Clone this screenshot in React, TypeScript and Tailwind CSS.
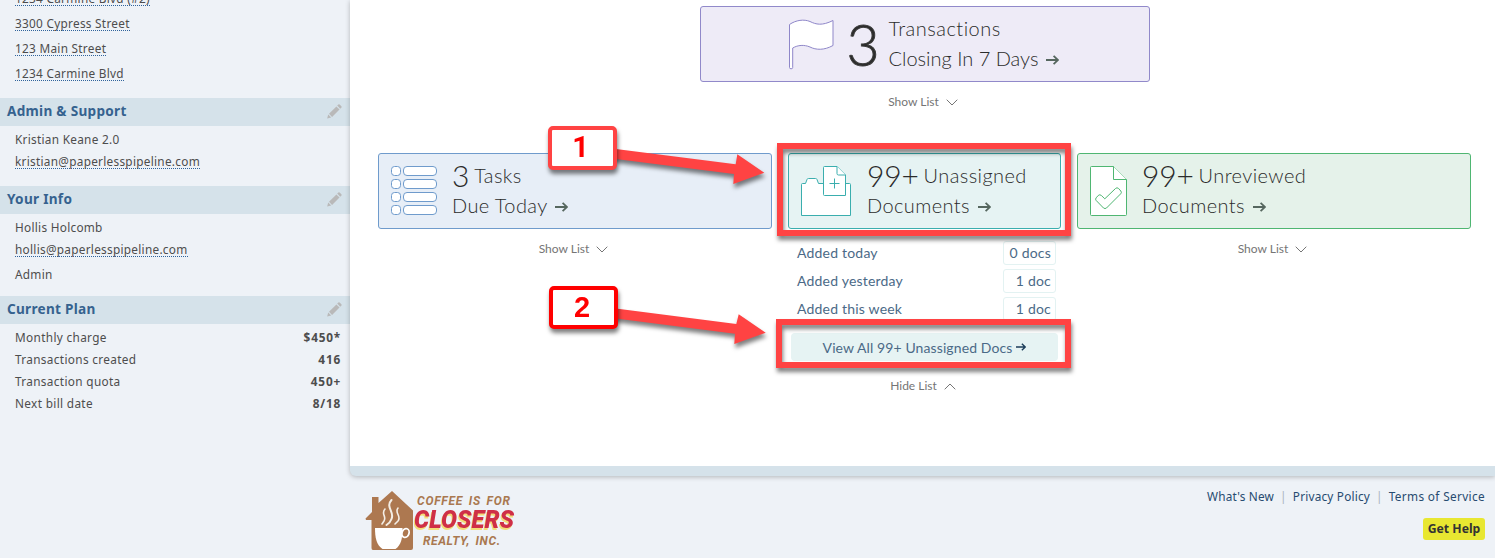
import React from "react";

const ArrowRight: React.FC<{ className?: string }> = ({
  className = "mb-[2px] ml-[2px] h-[10px] w-[13px] text-[#56675f]",
}) => (
  <svg viewBox="0 0 13 10" className={`inline-block ${className}`} fill="none" stroke="currentColor">
    <path d="M0 5h12M7.6 0.8L12 5L7.6 9.2" strokeWidth="1.8" />
  </svg>
);

const PencilIcon = () => (
  <svg viewBox="0 0 15 15" className="-mt-[2px] h-[15px] w-[15px] text-[#b9b9b9]" fill="currentColor">
    <path d="M0.2 14.6L1.2 10.6L4.2 13.6Z" />
    <path d="M2 9.8L9.4 2.4L12.5 5.5L5.1 12.9Z" />
    <path d="M10.2 1.6L11.4 0.4Q12 0 12.6 0.5L14.4 2.3Q14.9 2.9 14.4 3.5L13.2 4.7Z" />
  </svg>
);

const FlagIcon = () => (
  <svg viewBox="0 0 45 51" className="h-[51px] w-[45px]" fill="white" stroke="#8f87c9">
    <path d="M0.5 5.5C7 1 15 0 21 2.5C27 5.5 33 7 44 1.5V26.5C35 31.5 27 31 21 28C15 25.5 9 26 3.7 29V48.5Q3.7 49.8 2.1 49.8Q0.5 49.8 0.5 48.5Z" />
  </svg>
);

const TasksIcon = () => (
  <svg viewBox="0 0 46 50" className="h-[50px] w-[46px]" fill="white" stroke="#6f9bcc">
    {[0.5, 13.5, 26.5, 39.5].map((y) => (
      <g key={y}>
        <rect x="0.5" y={y} width="9" height="9" rx="3" />
        <rect x="12.5" y={y} width="33" height="9" rx="3.5" />
      </g>
    ))}
  </svg>
);

const FolderIcon = () => (
  <svg viewBox="0 0 50 50" className="h-[50px] w-[50px]" fill="white" stroke="#3aaeae">
    <path d="M0.5 49.5V18.5Q0.5 17.5 1.5 17.5H4.5L6 13.5Q6.3 12.5 7.5 12.5H14.5Q15.7 12.5 16 13.5L17.5 17.5H48.5Q49.5 17.5 49.5 18.5V49.5Z" />
    <path d="M23.5 0.5H36L44.5 9V29.5H23.5Q22.5 29.5 22.5 28.5V1.5Q22.5 0.5 23.5 0.5Z" />
    <path d="M36 0.5V7.5Q36 9 37.5 9H44.5" />
    <path d="M33.5 12.5V22.5M28.5 17.5H38.5" />
  </svg>
);

const ReviewedIcon = () => (
  <svg viewBox="0 0 37 50" className="h-[50px] w-[37px]" fill="white" stroke="#4fb672">
    <path d="M1.5 0.5H23.5L36.5 13.5V48.5Q36.5 49.5 35.5 49.5H1.5Q0.5 49.5 0.5 48.5V1.5Q0.5 0.5 1.5 0.5Z" />
    <path d="M23.5 0.5V13.5H36.5" />
    <path d="M6.2 31.8L8.2 29.5Q9.8 28 11.4 29.5L14.8 32.8L25.5 22.5Q27 21 28.6 22.5L30.8 25Q32 26.4 30.7 27.8L16.5 42Q15 43.2 13.5 42L6.2 34.5Q4.9 33.2 6.2 31.8Z" />
  </svg>
);

const ToggleList: React.FC<{ open?: boolean }> = ({ open }) => (
  <button className="flex h-[18px] items-center justify-center gap-[7px] pr-[3px] text-[12px] leading-[18px] text-[#757575]">
    {open ? "Hide List" : "Show List"}
    <svg viewBox="0 0 12 7" className="h-[7px] w-[12px]" fill="none" stroke="currentColor">
      <path d={open ? "M0.7 6.3L6 1L11.3 6.3" : "M0.7 0.7L6 6L11.3 0.7"} />
    </svg>
  </button>
);

interface StatCardProps {
  icon: React.ReactNode;
  count: string;
  label: string;
  secondLine: string;
  className: string;
}

const StatCard: React.FC<StatCardProps> = ({ icon, count, label, secondLine, className }) => (
  <div className={`flex h-[76px] items-center rounded-[3px] border pl-3 text-[#2b2b2b] ${className}`}>
    {icon}
    <div className="-mt-[2px] text-[20px] leading-[30px] font-light tracking-[0.4px] whitespace-nowrap">
      <div className="flex h-[30px] items-start gap-[5px]">
        <span className="text-[30px] tracking-[-0.2px]">{count}</span>
        <span>{label}</span>
      </div>
      <div className="h-[30px]">
        {secondLine} <ArrowRight />
      </div>
    </div>
  </div>
);

const SectionHeading: React.FC<{ title: string }> = ({ title }) => (
  <h2 className="flex h-7 items-center justify-between bg-[#d5e2ea] pr-2 pl-[7px] text-[13.6px] font-bold text-[#36628f]">
    <span className="-mt-[2px]">{title}</span>
    <PencilIcon />
  </h2>
);

const SidebarLink: React.FC<{ children: React.ReactNode }> = ({ children }) => (
  <a className="block w-fit border-b border-dotted border-[#2f639b] leading-[14px]">{children}</a>
);

const addresses = ["1234 Carmine Blvd (#2)", "3300 Cypress Street", "123 Main Street", "1234 Carmine Blvd"];

const plan = [
  ["Monthly charge", "$450*"],
  ["Transactions created", "416"],
  ["Transaction quota", "450+"],
  ["Next bill date", "8/18"],
];

const docCounts = [
  ["Added today", "0 docs"],
  ["Added yesterday", "1 doc"],
  ["Added this week", "1 doc"],
];

const Sidebar = () => (
  <aside className="h-[558px] w-[350px] shrink-0 overflow-hidden text-[11.8px] tracking-[0.28px] text-[#4d4d4d]">
    <div className="-mt-[9px] flex h-[107px] flex-col gap-[10px] pl-[15px]">
      {addresses.map((address) => (
        <SidebarLink key={address}>{address}</SidebarLink>
      ))}
    </div>
    <SectionHeading title="Admin & Support" />
    <div className="h-[60px] pt-[5px] pl-[15px]">
      <p className="mb-[7px] leading-4">Kristian Keane 2.0</p>
      <SidebarLink>kristian@paperlesspipeline.com</SidebarLink>
    </div>
    <SectionHeading title="Your Info" />
    <div className="h-[82px] pt-[5px] pl-[15px]">
      <p className="mb-[7px] leading-4">Hollis Holcomb</p>
      <SidebarLink>hollis@paperlesspipeline.com</SidebarLink>
      <p className="mt-[9px] leading-4">Admin</p>
    </div>
    <SectionHeading title="Current Plan" />
    <dl className="pt-[2px] pr-[9px] pl-[15px] leading-[22px] tracking-[0.34px]">
      {plan.map(([name, value]) => (
        <div key={name} className="flex justify-between">
          <dt>{name}</dt>
          <dd className="font-bold tracking-[0.8px]">{value}</dd>
        </div>
      ))}
    </dl>
  </aside>
);

const Dashboard = () => (
  <main className="h-[476px] rounded-bl-[6px] border-b-[10px] border-[#d5e2ea] bg-white pt-[6px] pl-7 font-['Lato',sans-serif] shadow-[0_1px_5px_rgba(0,0,0,0.25)]">
    <div className="flex h-[147px] w-[1093px] flex-col items-center">
      <div className="flex h-[76px] w-[450px] items-center rounded-[3px] border border-[#9189ca] bg-[#eeebf7] pl-[88px] text-[#2b2b2b]">
        <FlagIcon />
        <span className="ml-[13px] w-[42px] text-[57px] leading-[60px] font-light [-webkit-text-stroke:1px_#3c3c3c]">
          3
        </span>
        <div className="-mt-[2px] text-[20px] leading-[30px] font-light whitespace-nowrap">
          <p className="tracking-[0.5px]">Transactions</p>
          <p>
            Closing In 7 Days <ArrowRight />
          </p>
        </div>
      </div>
      <div className="mt-[11px]">
        <ToggleList />
      </div>
    </div>
    <div className="flex gap-4">
      <section className="flex w-[394px] flex-col gap-[11px]">
        <StatCard
          icon={<div className="w-[61px]"><TasksIcon /></div>}
          count="3"
          label="Tasks"
          secondLine="Due Today"
          className="border-[#6f9bcc] bg-[#e7eef7]"
        />
        <ToggleList />
      </section>
      <section className="flex w-[273px] flex-col">
        <StatCard
          icon={<div className="w-[66px]"><FolderIcon /></div>}
          count="99+"
          label="Unassigned"
          secondLine="Documents"
          className="border-[#3aaeae] bg-[#e6f3f3]"
        />
        <ul className="mt-3 flex flex-col gap-1 pr-[5px] pl-[9px] text-[14px] leading-[24px] tracking-[0.2px] text-[#4b6a87]">
          {docCounts.map(([label, docs]) => (
            <li key={label} className="flex h-6 justify-between">
              {label}
              <span className="h-6 w-[53px] rounded-[3px] border border-[#e3f2f2] pr-1 text-right leading-[22px]">
                {docs}
              </span>
            </li>
          ))}
        </ul>
        <a className="mt-[12px] mb-4 ml-[3px] flex h-7 w-[267px] items-center justify-center gap-1 rounded-[4px] bg-[#e6f3f3] text-[14px] tracking-[0.1px] text-[#4b6a87]">
          <span>View All 99+ Unassigned Docs</span>
          <ArrowRight className="h-[8px] w-[10px] text-[#1c3d5a]" />
        </a>
        <ToggleList open />
      </section>
      <section className="flex w-[394px] flex-col gap-[11px]">
        <StatCard
          icon={<div className="w-[52px]"><ReviewedIcon /></div>}
          count="99+"
          label="Unreviewed"
          secondLine="Documents"
          className="border-[#4fb672] bg-[#e5f2ea]"
        />
        <ToggleList />
      </section>
    </div>
  </main>
);

const CompanyLogo = () => (
  <svg viewBox="0 0 152 64" className="h-16 w-[152px] overflow-visible">
    <path fill="#ad7850" d="M0.5 28.5L7 22V7H13.5V13L27 1L48 20.5V58Q48 60 46 60H8Q6.5 60 6.5 58V30H1Z" />
    <g fill="none" stroke="#f4eee6" strokeLinecap="round">
      <path strokeWidth="2" d="M26.5 10C20 17 30 22 26.5 29C25.5 32 23 34 21.5 35" />
      <path strokeWidth="1.6" d="M20 19C15.5 24 22 26 19 31L17 34M33 18C29 23 37 26 33 31L30 34" />
    </g>
    <path fill="white" d="M10 38H37.5C37.5 49 36 55 30.5 59H17.5C11.5 55 10 48 10 38Z" />
    <ellipse cx="40.5" cy="43" rx="3.5" ry="4.5" fill="none" stroke="white" strokeWidth="1.8" transform="rotate(20 40.5 43)" />
    <g fontFamily="Roboto, sans-serif" fontStyle="italic" fontWeight="bold" fill="#a97850" fontSize="12">
      <text x="52" y="15" textLength="94" wordSpacing="2" letterSpacing="1">
        COFFEE IS FOR
      </text>
      <text x="58" y="55" textLength="78" wordSpacing="2" letterSpacing="1">
        REALTY, INC.
      </text>
    </g>
    <text
      x="49"
      y="38"
      fontFamily="Roboto, sans-serif"
      fontStyle="italic"
      fontWeight="900"
      fontSize="25"
      fill="#cf2f47"
      textLength="100"
      lengthAdjust="spacingAndGlyphs"
      className="drop-shadow-[-1px_2px_0_#f3dc78]"
    >
      CLOSERS
    </text>
  </svg>
);

const Footer = () => (
  <footer className="flex justify-between pt-[14px] pr-[10px] pl-[15px] text-[12px] text-[#274b70]">
    <CompanyLogo />
    <div className="-mt-px flex flex-col items-end">
      <nav className="flex h-4 items-center gap-[6px] text-[11.8px] tracking-[0.2px]">
        <a>What's New</a>
        <span className="text-[#a9b4bf]">|</span>
        <a>Privacy Policy</a>
        <span className="text-[#a9b4bf]">|</span>
        <a className="tracking-[0.35px]">Terms of Service</a>
      </nav>
      <button className="mt-[13px] flex h-[22px] w-[62px] items-center justify-center rounded-[3px] bg-[#e8e731] text-[12.2px] font-bold text-[#333]">
        Get Help
      </button>
    </div>
  </footer>
);

// Tutorial markers drawn over the dashboard
const Callouts = () => (
  <div className="pointer-events-none absolute inset-0 text-[29px] font-bold text-[#ff0000]">
    <svg
      viewBox="0 0 1495 558"
      className="absolute inset-0 h-[558px] w-[1495px] drop-shadow-[1px_4px_2px_rgba(0,0,0,0.5)]"
      fill="#ff4343"
    >
      <path d="M612 148.5L735.7 164.3L737.3 154.3L764.3 172.7L733.3 184L734 174L612 158.5Z" />
      <path d="M612 308L736.3 324L738.7 314.3L765.7 332.7L734.3 344L735 333.7L612 318Z" />
    </svg>
    <div className="absolute top-[143px] left-[777px] h-[93px] w-[294px] border-[6px] border-[#ff4343] drop-shadow-[1px_4px_2px_rgba(0,0,0,0.5)]" />
    <div className="absolute top-[319px] left-[776px] h-[49px] w-[295px] border-[6px] border-[#ff4343] drop-shadow-[1px_4px_2px_rgba(0,0,0,0.5)]" />
    <div className="absolute top-[126px] left-[548px] flex h-[44px] w-[69px] items-center justify-center rounded-[5px] border-4 border-[#ff4343] bg-white pr-[4px] font-['Roboto',sans-serif] drop-shadow-[1px_4px_2px_rgba(0,0,0,0.5)]">
      1
    </div>
    <div className="absolute top-[286px] left-[549px] flex h-[43px] w-[69px] items-center justify-center rounded-[5px] border-4 border-[#ff0000] bg-white pr-[3px] font-['Liberation_Sans',Arial,sans-serif] drop-shadow-[1px_4px_2px_rgba(0,0,0,0.5)]">
      2
    </div>
  </div>
);

const App: React.FC = () => {
  return (
    <div className="relative flex h-[558px] w-[1495px] overflow-hidden bg-[#eef2f7] font-['Noto_Sans',sans-serif]">
      <Sidebar />
      <div className="min-w-0 flex-1">
        <Dashboard />
        <Footer />
      </div>
      <Callouts />
    </div>
  );
};

export default App;
